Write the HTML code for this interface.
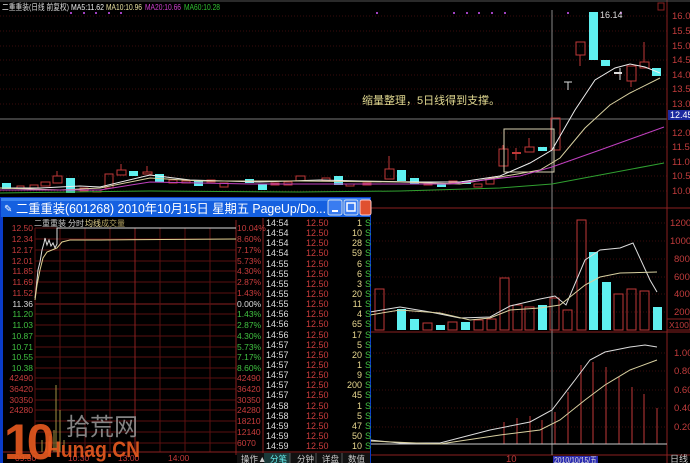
<!DOCTYPE html>
<html><head><meta charset="utf-8"><style>
html,body{margin:0;padding:0;background:#000;width:690px;height:463px;overflow:hidden}
svg{display:block}
text{font-family:"Liberation Sans","Noto Sans CJK SC",sans-serif}
.ax{fill:#c23c3c;font-size:9.5px}
</style></head><body>
<svg width="690" height="463" viewBox="0 0 690 463" xmlns="http://www.w3.org/2000/svg">
<rect width="690" height="463" fill="#000"/>
<g stroke="#3a0c0c" stroke-width="1" stroke-dasharray="1,2">
<line x1="0" y1="16" x2="667" y2="16"/><line x1="0" y1="31" x2="667" y2="31"/><line x1="0" y1="46" x2="667" y2="46"/><line x1="0" y1="60" x2="667" y2="60"/><line x1="0" y1="75" x2="667" y2="75"/><line x1="0" y1="89" x2="667" y2="89"/><line x1="0" y1="104" x2="667" y2="104"/><line x1="0" y1="133" x2="667" y2="133"/><line x1="0" y1="147" x2="667" y2="147"/><line x1="0" y1="162" x2="667" y2="162"/><line x1="0" y1="176" x2="667" y2="176"/><line x1="0" y1="191" x2="667" y2="191"/>
<line x1="370" y1="223" x2="667" y2="223"/><line x1="370" y1="241" x2="667" y2="241"/><line x1="370" y1="259" x2="667" y2="259"/><line x1="370" y1="277" x2="667" y2="277"/><line x1="370" y1="294" x2="667" y2="294"/><line x1="370" y1="312" x2="667" y2="312"/>
<line x1="370" y1="353" x2="667" y2="353"/><line x1="370" y1="371" x2="667" y2="371"/><line x1="370" y1="390" x2="667" y2="390"/><line x1="370" y1="408" x2="667" y2="408"/><line x1="370" y1="427" x2="667" y2="427"/>
</g>
<line x1="0" y1="119" x2="667" y2="119" stroke="#777" stroke-width="1"/>
<g stroke="#8a2020" stroke-width="1">
<line x1="667" y1="0" x2="667" y2="463"/>
<line x1="0" y1="208" x2="690" y2="208"/>
<line x1="370" y1="332" x2="690" y2="332"/>
<line x1="370" y1="455" x2="690" y2="455"/>
<line x1="0" y1="1" x2="690" y2="1" stroke="#555"/>
</g>
<line x1="552" y1="10" x2="552" y2="455" stroke="#888" stroke-width="1"/>
<text x="2" y="10" font-size="8.5" fill="#ddd" textLength="67" lengthAdjust="spacingAndGlyphs">二重重装(日线 前复权)</text>
<text x="71" y="10" font-size="8.5" fill="#eee" textLength="33" lengthAdjust="spacingAndGlyphs">MA5:11.62</text>
<text x="106" y="10" font-size="8.5" fill="#e8e0a0" textLength="36" lengthAdjust="spacingAndGlyphs">MA10:10.96</text>
<text x="145" y="10" font-size="8.5" fill="#d040d0" textLength="36" lengthAdjust="spacingAndGlyphs">MA20:10.66</text>
<text x="184" y="10" font-size="8.5" fill="#30c030" textLength="36" lengthAdjust="spacingAndGlyphs">MA60:10.28</text>
<g fill="#a040c0"><rect x="70" y="12" width="2" height="2"/><rect x="83" y="12" width="2" height="2"/><rect x="95" y="12" width="2" height="2"/><rect x="108" y="12" width="2" height="2"/><rect x="120" y="12" width="2" height="2"/><rect x="376" y="12" width="2" height="2"/><rect x="453" y="12" width="2" height="2"/><rect x="466" y="12" width="2" height="2"/><rect x="478" y="12" width="2" height="2"/><rect x="491" y="12" width="2" height="2"/><rect x="504" y="12" width="2" height="2"/><rect x="567" y="12" width="2" height="2"/><rect x="620" y="12" width="2" height="2"/></g>
<rect x="658" y="3" width="6" height="7" fill="none" stroke="#8a2020"/>
<g class="ax">
<text x="672" y="19">16.00</text><text x="672" y="34">15.50</text><text x="672" y="49">15.00</text><text x="672" y="63">14.50</text><text x="672" y="78">14.00</text><text x="672" y="92">13.50</text><text x="672" y="107">13.00</text><text x="672" y="136">12.00</text><text x="672" y="150">11.50</text><text x="672" y="165">11.00</text><text x="672" y="179">10.50</text><text x="672" y="194">10.00</text>
<text x="670" y="226">12000</text><text x="670" y="244">10000</text><text x="674" y="262">8000</text><text x="674" y="280">6000</text><text x="674" y="297">4000</text><text x="674" y="315">2000</text>
<text x="674" y="356">1.00</text><text x="674" y="374">0.80</text><text x="674" y="393">0.60</text><text x="674" y="411">0.40</text><text x="674" y="430">0.20</text>
<text x="506" y="462">10</text>
</g>
<rect x="668" y="110" width="22" height="10" fill="#1c2aa0"/><text x="670" y="118" font-size="9" fill="#fff">12.45</text>
<rect x="667" y="319" width="23" height="11" fill="none" stroke="#8a2020"/><text x="669" y="328" font-size="8.5" fill="#c23c3c">X100</text>
<rect x="553" y="456" width="45" height="8" fill="#2a2ab0"/><text x="554" y="463" font-size="8.5" fill="#ddd" textLength="43" lengthAdjust="spacingAndGlyphs">2010/10/15/五</text>
<text x="670" y="462" font-size="9" fill="#ccc">日线</text>
<text x="362" y="104" font-size="11" fill="#e0d890">缩量整理，5日线得到支撑。</text>
<text x="600" y="18" font-size="9" fill="#ddd">16.14</text>
<g stroke="#c03838" fill="none" stroke-width="1">
<rect x="17" y="186" width="7" height="2"/><rect x="30" y="185" width="8" height="3"/><rect x="41" y="182" width="9" height="4"/><rect x="53" y="176" width="9" height="7"/><line x1="57" y1="171" x2="57" y2="176"/>
<rect x="80" y="188" width="8" height="3"/><rect x="93" y="190" width="8" height="2"/><rect x="105" y="174" width="8" height="14"/><rect x="117" y="170" width="9" height="5"/><line x1="121" y1="164" x2="121" y2="170"/><rect x="143" y="172" width="9" height="2"/><line x1="147" y1="166" x2="147" y2="172"/>
<rect x="169" y="180" width="8" height="3"/><rect x="182" y="181" width="8" height="2"/><rect x="207" y="180" width="8" height="2"/><rect x="220" y="183" width="8" height="4"/><rect x="271" y="183" width="8" height="2"/><rect x="284" y="182" width="8" height="3"/><rect x="296" y="176" width="9" height="5"/><rect x="322" y="178" width="8" height="3"/><rect x="346" y="184" width="8" height="2"/><rect x="363" y="183" width="8" height="2"/><rect x="385" y="169" width="9" height="10"/><line x1="389" y1="156" x2="389" y2="169"/>
<rect x="424" y="183" width="8" height="2"/><rect x="449" y="181" width="8" height="2"/><rect x="474" y="184" width="8" height="3"/><rect x="486" y="178" width="8" height="6"/>
<rect x="499" y="149" width="9" height="17"/><line x1="503" y1="145" x2="503" y2="149"/>
<line x1="512" y1="153" x2="521" y2="153" stroke-width="2"/><line x1="516" y1="148" x2="516" y2="160"/>
<rect x="525" y="147" width="9" height="5"/><line x1="529" y1="138" x2="529" y2="147"/>
<rect x="551" y="118" width="9" height="32"/>
<rect x="576" y="42" width="9" height="13"/><line x1="580" y1="55" x2="580" y2="66"/>
<rect x="627" y="66" width="9" height="15"/><line x1="631" y1="81" x2="631" y2="87"/>
<rect x="640" y="62" width="9" height="6"/><line x1="644" y1="42" x2="644" y2="62"/>
</g>
<g fill="#5ff0f0">
<rect x="2" y="183" width="9" height="6"/><rect x="66" y="178" width="9" height="15"/><rect x="129" y="171" width="9" height="5"/><rect x="155" y="174" width="9" height="8"/><rect x="194" y="180" width="9" height="6"/><rect x="245" y="179" width="9" height="4"/><rect x="258" y="184" width="9" height="6"/><rect x="334" y="176" width="9" height="9"/>
<rect x="397" y="170" width="9" height="11"/><rect x="410" y="178" width="9" height="6"/><rect x="437" y="184" width="9" height="3"/><rect x="462" y="181" width="9" height="3"/>
<rect x="538" y="147" width="9" height="4"/><rect x="589" y="12" width="9" height="48"/><rect x="601" y="60" width="9" height="6"/><rect x="652" y="68" width="9" height="8"/>
</g>
<g stroke="#ddd"><line x1="568" y1="82" x2="568" y2="90"/><line x1="564" y1="82" x2="572" y2="82"/><line x1="614" y1="73" x2="622" y2="73" stroke-width="2"/><line x1="620" y1="68" x2="620" y2="80"/></g>
<rect x="504" y="129" width="50" height="43" fill="none" stroke="#d8d0b0"/>
<polyline fill="none" stroke="#eee" stroke-width="1" points="0,188 40,188 80,186 100,187 150,175 190,180 260,182 320,180 360,181 420,182 460,182 500,176 530,163 552,150 575,110 595,80 615,68 630,64 645,67 660,73"/>
<polyline fill="none" stroke="#d8d0a0" stroke-width="1" points="0,188 60,190 100,188 150,178 200,181 300,181 400,182 460,184 500,177 540,170 560,158 585,128 610,105 630,93 660,78"/>
<polyline fill="none" stroke="#c040c0" stroke-width="1" points="0,190 100,190 150,182 250,184 350,184 450,184 520,176 552,167 600,150 664,127"/>
<polyline fill="none" stroke="#30a030" stroke-width="1" points="0,193 150,191 300,192 400,191 500,188 552,184 600,175 664,163"/>
<g stroke="#c03838" fill="none">
<rect x="375" y="289" width="9" height="41"/><rect x="423" y="323" width="9" height="7"/><rect x="448" y="322" width="9" height="8"/><rect x="474" y="320" width="9" height="10"/><rect x="487" y="319" width="9" height="11"/><rect x="500" y="278" width="9" height="52"/><rect x="513" y="305" width="9" height="25"/><rect x="525" y="307" width="9" height="23"/><rect x="550" y="298" width="9" height="32"/><rect x="563" y="310" width="9" height="20"/><rect x="577" y="220" width="9" height="110"/><rect x="614" y="294" width="9" height="36"/><rect x="627" y="289" width="9" height="41"/><rect x="640" y="291" width="9" height="39"/>
</g>
<g fill="#5ff0f0"><rect x="397" y="309" width="9" height="21"/><rect x="410" y="319" width="9" height="11"/><rect x="436" y="325" width="9" height="5"/><rect x="461" y="322" width="9" height="8"/><rect x="538" y="305" width="9" height="25"/><rect x="589" y="252" width="9" height="78"/><rect x="602" y="282" width="9" height="48"/><rect x="653" y="307" width="9" height="23"/></g>
<polyline fill="none" stroke="#ddd" points="370,312 400,307 430,312 460,318 490,317 510,306 540,299 555,296 566,305 585,260 600,250 620,248 633,243 650,280 657,292"/>
<polyline fill="none" stroke="#d8d0a0" points="370,315 400,310 440,313 470,320 490,318 510,310 540,308 560,305 585,285 600,277 620,273 657,272"/>
<g stroke="#c03838"><line x1="555" y1="444" x2="555" y2="412"/><line x1="568" y1="444" x2="568" y2="392"/><line x1="581" y1="444" x2="581" y2="365"/><line x1="593" y1="444" x2="593" y2="362"/><line x1="606" y1="444" x2="606" y2="367"/><line x1="619" y1="444" x2="619" y2="377"/><line x1="632" y1="444" x2="632" y2="387"/><line x1="644" y1="444" x2="644" y2="394"/><line x1="657" y1="444" x2="657" y2="408"/>
<line x1="504" y1="444" x2="504" y2="422"/><line x1="517" y1="444" x2="517" y2="418"/><line x1="530" y1="444" x2="530" y2="416"/><line x1="542" y1="444" x2="542" y2="420"/></g>
<line x1="370" y1="444" x2="667" y2="444" stroke="#ccc"/>
<polyline fill="none" stroke="#ddd" points="370,440 400,443 440,443 490,430 530,422 552,410 575,380 590,360 605,352 630,347 645,345 657,347"/>
<polyline fill="none" stroke="#d8d0a0" points="370,441 440,444 500,435 540,430 560,420 585,400 605,385 630,370 657,360"/>
<!-- popup -->
<rect x="0" y="197" width="371" height="266" fill="#0a3cc8"/>
<rect x="1" y="198" width="369" height="19" fill="#1560e0"/>
<rect x="1" y="198" width="369" height="3" fill="#3c84f0"/>
<text x="4" y="212" font-size="10" fill="#fff">✎</text>
<text x="16" y="213" font-size="12.5" fill="#fff" textLength="310" lengthAdjust="spacingAndGlyphs">二重重装(601268) 2010年10月15日 星期五 PageUp/Do...</text>
<rect x="328" y="200" width="14" height="15" rx="2" fill="#3a7cf0" stroke="#cde"/><rect x="332" y="210" width="6" height="2" fill="#fff"/>
<rect x="344" y="200" width="14" height="15" rx="2" fill="#3a7cf0" stroke="#cde"/><rect x="347" y="203" width="8" height="8" fill="none" stroke="#fff" stroke-width="1.5"/>
<rect x="360" y="200" width="11" height="15" rx="2" fill="#e05030" stroke="#fcc"/>
<rect x="3" y="217" width="367" height="246" fill="#000"/>
<g stroke="#5a1010" stroke-width="1">
<line x1="35" y1="228" x2="236" y2="228"/><line x1="35" y1="239" x2="236" y2="239"/><line x1="35" y1="250" x2="236" y2="250"/><line x1="35" y1="261" x2="236" y2="261"/><line x1="35" y1="271" x2="236" y2="271"/><line x1="35" y1="282" x2="236" y2="282"/><line x1="35" y1="293" x2="236" y2="293"/><line x1="35" y1="304" x2="236" y2="304" stroke="#8a2020"/><line x1="35" y1="314" x2="236" y2="314"/><line x1="35" y1="325" x2="236" y2="325"/><line x1="35" y1="336" x2="236" y2="336"/><line x1="35" y1="347" x2="236" y2="347"/><line x1="35" y1="357" x2="236" y2="357"/><line x1="35" y1="368" x2="236" y2="368"/><line x1="35" y1="378" x2="236" y2="378"/><line x1="35" y1="389" x2="236" y2="389"/><line x1="35" y1="400" x2="236" y2="400"/><line x1="35" y1="410" x2="236" y2="410"/><line x1="35" y1="421" x2="236" y2="421"/><line x1="35" y1="432" x2="236" y2="432"/><line x1="35" y1="443" x2="236" y2="443"/>
<line x1="35" y1="228" x2="35" y2="452"/><line x1="60" y1="228" x2="60" y2="452"/><line x1="85" y1="228" x2="85" y2="452"/><line x1="110" y1="228" x2="110" y2="452"/><line x1="135" y1="228" x2="135" y2="452" stroke="#8a2020"/><line x1="160" y1="228" x2="160" y2="452"/><line x1="185" y1="228" x2="185" y2="452"/><line x1="210" y1="228" x2="210" y2="452"/><line x1="236" y1="220" x2="236" y2="455" stroke="#8a2020"/>
<line x1="3" y1="452" x2="370" y2="452" stroke="#8a2020"/><line x1="263" y1="218" x2="263" y2="463" stroke="#8a2020"/>
</g>
<text x="34" y="226" font-size="8" fill="#ccc">二重重装</text><text x="68" y="226" font-size="8" fill="#ccc">分时</text><text x="85" y="226" font-size="8" fill="#e8d890">均线</text><text x="101" y="226" font-size="8" fill="#b0a060">成交量</text>
<g font-size="8.5" text-anchor="end">
<g fill="#c83c3c"><text x="33" y="231">12.50</text><text x="33" y="242">12.34</text><text x="33" y="253">12.17</text><text x="33" y="264">12.01</text><text x="33" y="274">11.85</text><text x="33" y="285">11.69</text><text x="33" y="296">11.52</text></g>
<text x="33" y="307" fill="#ddd">11.36</text>
<g fill="#40c040"><text x="33" y="317">11.20</text><text x="33" y="328">11.03</text><text x="33" y="339">10.87</text><text x="33" y="350">10.71</text><text x="33" y="360">10.55</text><text x="33" y="371">10.38</text></g>
<g fill="#c83c3c"><text x="33" y="381">42490</text><text x="33" y="392">36420</text><text x="33" y="403">30350</text><text x="33" y="413">24280</text></g>
</g>
<g font-size="8.5">
<g fill="#c83c3c"><text x="237" y="231">10.04%</text><text x="237" y="242">8.60%</text><text x="237" y="253">7.17%</text><text x="237" y="264">5.73%</text><text x="237" y="274">4.30%</text><text x="237" y="285">2.87%</text><text x="237" y="296">1.43%</text></g>
<text x="237" y="307" fill="#ddd">0.00%</text>
<g fill="#40c040"><text x="237" y="317">1.43%</text><text x="237" y="328">2.87%</text><text x="237" y="339">4.30%</text><text x="237" y="350">5.73%</text><text x="237" y="360">7.17%</text><text x="237" y="371">8.60%</text></g>
<g fill="#c83c3c"><text x="237" y="381">42490</text><text x="237" y="392">36420</text><text x="237" y="403">30350</text><text x="237" y="413">24280</text><text x="237" y="424">18210</text><text x="237" y="435">12140</text><text x="237" y="446">6070</text></g>
<g fill="#c83c3c"><text x="15" y="461">09:30</text><text x="68" y="461">10:30</text><text x="118" y="461">13:00</text><text x="168" y="461">14:00</text></g>
</g>
<polyline fill="none" stroke="#ddd" points="35,298 36,290 38,270 40,262 42,250 44,243 45,238 47,245 49,240 51,246 53,243 55,248 57,244 57,228 236,228"/>
<polyline fill="none" stroke="#e0d090" points="35,300 37,285 40,270 43,258 47,252 52,250 57,248 62,242 70,240 100,240 236,239"/>
<g stroke="#a09040"><line x1="56" y1="452" x2="56" y2="385"/><line x1="60" y1="452" x2="60" y2="410"/><line x1="54" y1="452" x2="54" y2="430"/><line x1="42" y1="452" x2="42" y2="440"/><line x1="46" y1="452" x2="46" y2="442"/><line x1="50" y1="452" x2="50" y2="436"/><line x1="64" y1="452" x2="64" y2="440"/></g>
<!-- ticks: 23 rows, step 10.14 -->
<g font-size="9">
<g fill="#ddd">
<text x="266" y="226">14:54</text><text x="266" y="236">14:54</text><text x="266" y="246">14:54</text><text x="266" y="256">14:54</text><text x="266" y="267">14:55</text><text x="266" y="277">14:55</text><text x="266" y="287">14:55</text><text x="266" y="297">14:55</text><text x="266" y="307">14:55</text><text x="266" y="317">14:56</text><text x="266" y="327">14:56</text><text x="266" y="338">14:56</text><text x="266" y="348">14:57</text><text x="266" y="358">14:57</text><text x="266" y="368">14:57</text><text x="266" y="378">14:57</text><text x="266" y="388">14:57</text><text x="266" y="398">14:57</text><text x="266" y="409">14:58</text><text x="266" y="419">14:58</text><text x="266" y="429">14:59</text><text x="266" y="439">14:59</text><text x="266" y="449">14:59</text>
</g>
<g fill="#c83c3c">
<text x="306" y="226">12.50</text><text x="306" y="236">12.50</text><text x="306" y="246">12.50</text><text x="306" y="256">12.50</text><text x="306" y="267">12.50</text><text x="306" y="277">12.50</text><text x="306" y="287">12.50</text><text x="306" y="297">12.50</text><text x="306" y="307">12.50</text><text x="306" y="317">12.50</text><text x="306" y="327">12.50</text><text x="306" y="338">12.50</text><text x="306" y="348">12.50</text><text x="306" y="358">12.50</text><text x="306" y="368">12.50</text><text x="306" y="378">12.50</text><text x="306" y="388">12.50</text><text x="306" y="398">12.50</text><text x="306" y="409">12.50</text><text x="306" y="419">12.50</text><text x="306" y="429">12.50</text><text x="306" y="439">12.50</text><text x="306" y="449">12.50</text>
</g>
<g fill="#e8d890" text-anchor="end">
<text x="362" y="226">1</text><text x="362" y="236">10</text><text x="362" y="246">28</text><text x="362" y="256">59</text><text x="362" y="267">6</text><text x="362" y="277">6</text><text x="362" y="287">3</text><text x="362" y="297">20</text><text x="362" y="307">11</text><text x="362" y="317">4</text><text x="362" y="327">65</text><text x="362" y="338">17</text><text x="362" y="348">5</text><text x="362" y="358">20</text><text x="362" y="368">1</text><text x="362" y="378">9</text><text x="362" y="388">200</text><text x="362" y="398">45</text><text x="362" y="409">1</text><text x="362" y="419">5</text><text x="362" y="429">47</text><text x="362" y="439">50</text><text x="362" y="449">10</text>
</g>
<g fill="#40c040"><text x="365" y="226">S</text><text x="365" y="236">S</text><text x="365" y="246">S</text><text x="365" y="256">S</text><text x="365" y="267">S</text><text x="365" y="277">S</text><text x="365" y="287">S</text><text x="365" y="297">S</text><text x="365" y="307">S</text><text x="365" y="317">S</text><text x="365" y="327">S</text><text x="365" y="338">S</text><text x="365" y="348">S</text><text x="365" y="358">S</text><text x="365" y="368">S</text><text x="365" y="378">S</text><text x="365" y="388">S</text><text x="365" y="398">S</text><text x="365" y="409">S</text><text x="365" y="419">S</text><text x="365" y="429">S</text><text x="365" y="439">S</text><text x="365" y="449">S</text></g>
</g>
<rect x="237" y="453" width="133" height="10" fill="#111"/>
<rect x="264" y="453" width="26" height="10" fill="#1a3a3a"/>
<g font-size="8.5" fill="#ccc"><text x="241" y="462">操作▲</text><text x="270" y="462" fill="#6ee">分笔</text><text x="297" y="462">分钟</text><text x="322" y="462">详盘</text><text x="348" y="462">数值</text></g>
<g stroke="#555"><line x1="290" y1="453" x2="290" y2="463"/><line x1="316" y1="453" x2="316" y2="463"/><line x1="342" y1="453" x2="342" y2="463"/></g>
<text x="4" y="459" font-size="50" font-weight="bold" fill="#e85a20" opacity="0.9" letter-spacing="-5">10</text>
<text x="66" y="435" font-size="24" fill="#9a9a9a" opacity="0.85">拾荒网</text>
<text x="47" y="457" font-size="22" font-weight="bold" fill="#e85a20" opacity="0.9" textLength="93" lengthAdjust="spacingAndGlyphs">Hunag.CN</text>
</svg>
</body></html>
